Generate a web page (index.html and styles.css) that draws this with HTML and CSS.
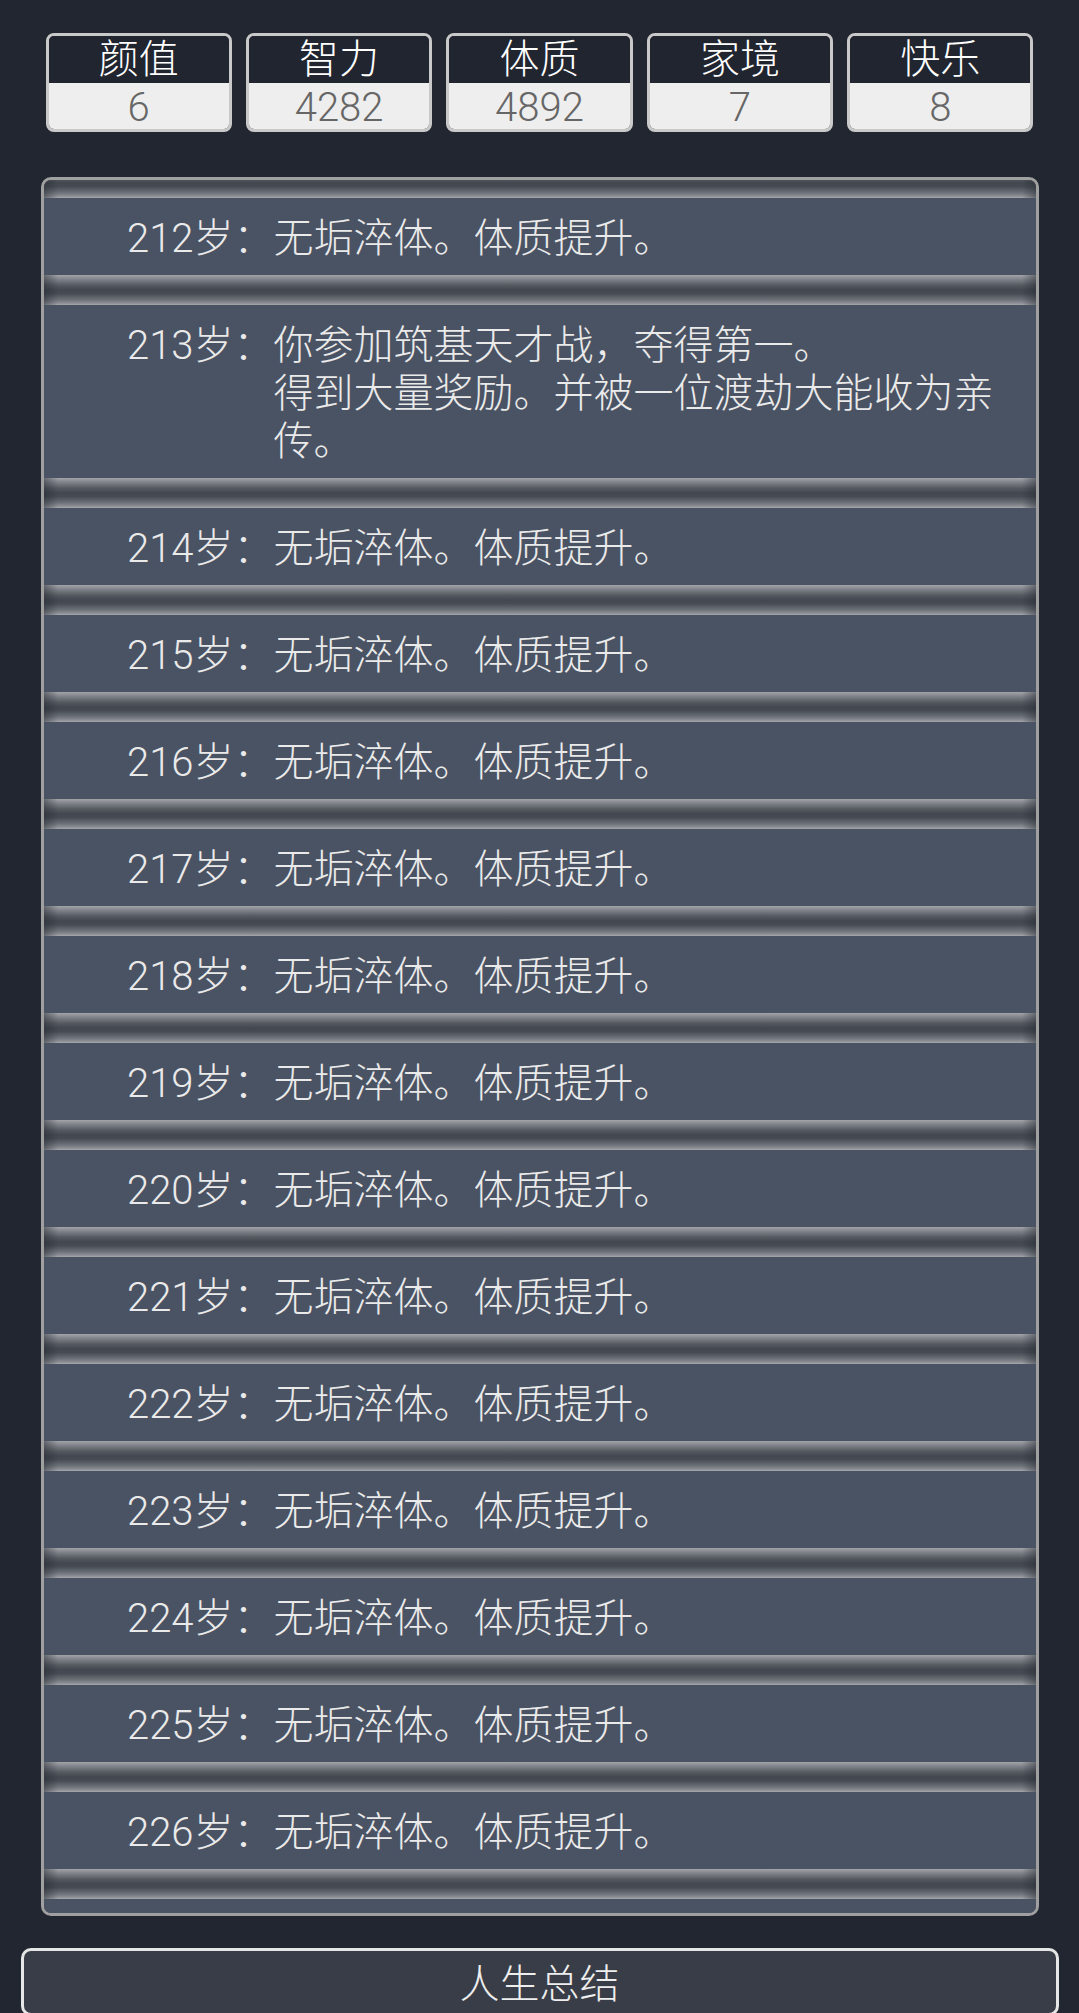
FILE: index.html
```html
<!DOCTYPE html>
<html lang="zh-CN">
<head>
    <meta charset="UTF-8">
    <meta name="viewport" content="width=device-width, initial-scale=1.0">
    <title>人生重开模拟器</title>
    <link rel="stylesheet" href="styles.css">
</head>
<body>
    <div class="stats">
        <div class="stat">
            <div class="stat-name">颜值</div>
            <div class="stat-value">6</div>
        </div>
        <div class="stat">
            <div class="stat-name">智力</div>
            <div class="stat-value">4282</div>
        </div>
        <div class="stat">
            <div class="stat-name">体质</div>
            <div class="stat-value">4892</div>
        </div>
        <div class="stat">
            <div class="stat-name">家境</div>
            <div class="stat-value">7</div>
        </div>
        <div class="stat">
            <div class="stat-name">快乐</div>
            <div class="stat-value">8</div>
        </div>
    </div>

    <div class="trajectory">
        <ul class="trajectory-list">
            <li class="entry"><span class="age">211岁：</span><span class="event">无垢淬体。体质提升。</span></li>
            <li class="entry"><span class="age">212岁：</span><span class="event">无垢淬体。体质提升。</span></li>
            <li class="entry"><span class="age">213岁：</span><span class="event">你参加筑基天才战，夺得第一。<br>得到大量奖励。并被一位渡劫大能收为亲传。</span></li>
            <li class="entry"><span class="age">214岁：</span><span class="event">无垢淬体。体质提升。</span></li>
            <li class="entry"><span class="age">215岁：</span><span class="event">无垢淬体。体质提升。</span></li>
            <li class="entry"><span class="age">216岁：</span><span class="event">无垢淬体。体质提升。</span></li>
            <li class="entry"><span class="age">217岁：</span><span class="event">无垢淬体。体质提升。</span></li>
            <li class="entry"><span class="age">218岁：</span><span class="event">无垢淬体。体质提升。</span></li>
            <li class="entry"><span class="age">219岁：</span><span class="event">无垢淬体。体质提升。</span></li>
            <li class="entry"><span class="age">220岁：</span><span class="event">无垢淬体。体质提升。</span></li>
            <li class="entry"><span class="age">221岁：</span><span class="event">无垢淬体。体质提升。</span></li>
            <li class="entry"><span class="age">222岁：</span><span class="event">无垢淬体。体质提升。</span></li>
            <li class="entry"><span class="age">223岁：</span><span class="event">无垢淬体。体质提升。</span></li>
            <li class="entry"><span class="age">224岁：</span><span class="event">无垢淬体。体质提升。</span></li>
            <li class="entry"><span class="age">225岁：</span><span class="event">无垢淬体。体质提升。</span></li>
            <li class="entry"><span class="age">226岁：</span><span class="event">无垢淬体。体质提升。</span></li>
            <li class="entry"><span class="age">227岁：</span><span class="event">无垢淬体。体质提升。</span></li>
        </ul>
    </div>

    <button class="summary-btn">人生总结</button>
</body>
</html>
```

FILE: styles.css
```css
* {
    box-sizing: border-box;
    margin: 0;
    padding: 0;
}

body {
    font-family: Roboto, 'Noto Sans CJK SC', sans-serif;
    font-weight: 300;
    background: #212630;
    color: #eaeaea;
    overflow: hidden;
}

.stats {
    width: 988px;
    margin: 33px auto 0;
    display: grid;
    grid-template-columns: repeat(5, 1fr);
    gap: 14px;
}

.stat {
    border: 3px solid #c9c9c9;
    border-radius: 8px;
    overflow: hidden;
    text-align: center;
    font-size: 40px;
}

.stat-name {
    background: #212530;
    color: #fff;
    padding-top: 1px;
    line-height: 46px;
}

.stat-value {
    background: #eeeeee;
    color: #666;
    padding-top: 4px;
    line-height: 42px;
}

.trajectory {
    width: 998px;
    height: 1739px;
    margin: 45px auto 0;
    border: 3px solid #a0a0a0;
    border-radius: 10px;
    background: #4a5363;
    overflow: hidden;
}

/* scrolled so that only the tail of 211's separator shows */
.trajectory-list {
    list-style: none;
    margin-top: -89px;
}

.entry {
    display: grid;
    grid-template-columns: 230px 1fr;
    background: #4a5363;
    font-size: 40px;
    line-height: 48px;
    position: relative;
    padding: 16.5px 20px 12.5px 0;
    margin-bottom: 30px;
}

.entry::after {
    content: "";
    position: absolute;
    left: 0;
    right: 0;
    bottom: -30px;
    height: 30px;
    background:
        linear-gradient(to right, rgba(34, 38, 46, 0.45), rgba(34, 38, 46, 0) 14px, rgba(34, 38, 46, 0) calc(100% - 14px), rgba(34, 38, 46, 0.45)),
        linear-gradient(to bottom, #a2a4a8 0%, #80838a 14%, #555960 34%, #43474f 50%, #474b53 62%, #6c7077 82%, #8c8f95 94%, #a6a8ac 100%);
}

.age {
    text-align: right;
    white-space: nowrap;
}

.summary-btn {
    display: block;
    width: 1038px;
    margin: 32px auto 0;
    padding: 10px 0 4px;
    background: #393d47;
    border: 3px solid #e6e6e6;
    border-radius: 10px;
    color: #eee;
    font-family: inherit;
    font-weight: 300;
    font-size: 40px;
    line-height: 48px;
}
```
